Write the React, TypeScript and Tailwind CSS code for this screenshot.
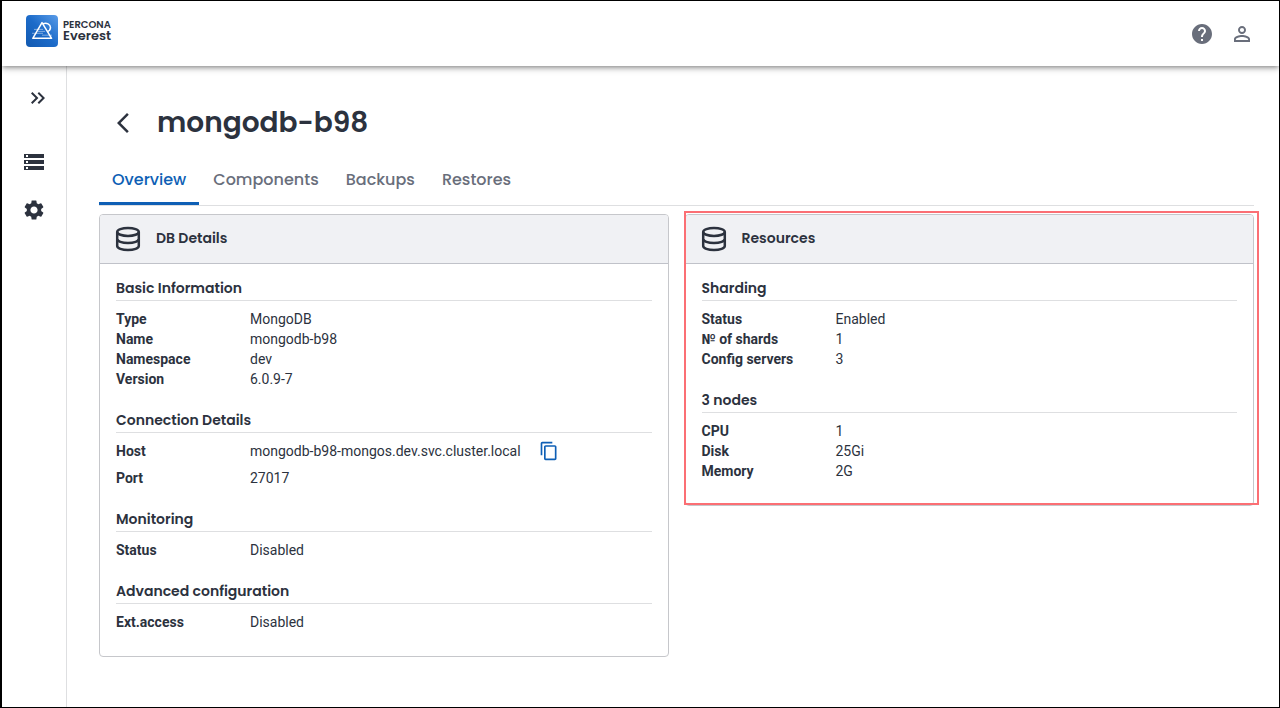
import type { ReactNode } from "react";
import {
  MdArrowBackIosNew,
  MdContentCopy,
  MdHelp,
  MdKeyboardDoubleArrowRight,
  MdPermIdentity,
  MdSettings,
  MdStorage,
} from "react-icons/md";

const headingFont = "font-[Poppins,Inter,sans-serif]";

function Logo() {
  return (
    <a href="#" className={`flex items-center gap-[5px] text-[#2c323e] ${headingFont}`}>
      <svg width="32" height="32" viewBox="0 0 32 32" aria-hidden="true">
        <defs>
          <linearGradient id="logo-bg" x1="0" y1="1" x2="1" y2="0">
            <stop offset="0" stopColor="#1259b0" />
            <stop offset="0.5" stopColor="#1c6bc9" />
            <stop offset="1" stopColor="#5a9ce8" />
          </linearGradient>
        </defs>
        <rect width="32" height="32" rx="4" fill="url(#logo-bg)" />
        <g fill="none" stroke="#fff" strokeWidth="1.5" strokeLinejoin="round">
          <path d="M16 7.6 L6.8 23.3 H25.6 Z" />
          <path d="M17 8.8 C20.6 7.300 24.400 9.200 24.500 12.600 C24.500 14.600 23.200 16 21.300 16.600" />
          <g strokeWidth="0.9" opacity="0.5">
            <path d="M8 14.4H17M6 18.300H17M12 16.400H19M16 20.200H26" />
          </g>
        </g>
      </svg>
      <span className="flex flex-col font-semibold">
        <span className="text-[10px] leading-[10px]">PERCONA</span>
        <span className="text-[13px] leading-3">Everest</span>
      </span>
    </a>
  );
}

function DatabaseIcon() {
  return (
    <svg width="28" height="28" viewBox="0 0 28 28" fill="none" stroke="#2c323e" strokeWidth="2.5" aria-hidden="true">
      <ellipse cx="14" cy="6.9" rx="10.8" ry="4" />
      <path d="M3.2 6.9V21.1C3.2 23.3 8 25.1 14 25.1S24.800 23.300 24.800 21.100V6.900" />
      <path d="M3.2 14C3.2 16.2 8 18 14 18S24.800 16.200 24.800 14" />
    </svg>
  );
}

function Card({ title, children }: { title: string; children: ReactNode }) {
  return (
    <section className="overflow-hidden rounded border border-[#c6c7cb] bg-white">
      <header className="flex h-[49px] items-center gap-3.5 border-b border-[#c0c2c9] bg-[#f0f1f4] px-3.5">
        <DatabaseIcon />
        <h2 className={`pb-0.5 text-[14px] font-semibold ${headingFont}`}>{title}</h2>
      </header>
      <div className="flex flex-col gap-5 px-4 pt-[13px] pb-6">{children}</div>
    </section>
  );
}

function Section({ title, children }: { title: string; children: ReactNode }) {
  return (
    <section>
      <h3 className={`border-b border-[#dedfe1] text-[14px] leading-[23px] font-semibold ${headingFont}`}>{title}</h3>
      <dl className="pt-2">{children}</dl>
    </section>
  );
}

function Row({ label, value, copy = false }: { label: string; value: string; copy?: boolean }) {
  return (
    <div className={copy ? "mb-[7px] flex h-5 items-center" : "flex h-5 items-center"}>
      <dt className="w-[134px] shrink-0 font-bold">{label}</dt>
      <dd className="flex items-center gap-[18px]">
        {value}
        {copy && (
          <button type="button" aria-label="Copy host" className="-my-2 text-[#0e5fb5]">
            <MdContentCopy size={20} />
          </button>
        )}
      </dd>
    </div>
  );
}

const tabs = ["Overview", "Components", "Backups", "Restores"];

export default function App() {
  return (
    <div className="flex min-h-screen flex-col border border-l-2 border-black bg-white font-[Roboto,sans-serif] text-[14px] leading-5 text-[#2c323e]">
      <header className="relative flex h-[65px] items-center justify-between pr-[25px] pl-6 shadow-[0_2px_4px_-1px_rgba(0,0,0,0.3),0_3px_6px_rgba(0,0,0,0.22)]">
        <div className="pb-1.5">
          <Logo />
        </div>
        <div className="flex items-center gap-4 text-[#696e7b]">
          <button type="button" aria-label="Help">
            <MdHelp size={24} />
          </button>
          <button type="button" aria-label="Account">
            <MdPermIdentity size={24} />
          </button>
        </div>
      </header>
      <div className="flex flex-1">
        <nav aria-label="Main" className="flex w-[65px] shrink-0 flex-col items-center border-r border-[#dedfe1] pt-5">
          <button type="button" aria-label="Expand menu" className="mb-10 ml-2">
            <MdKeyboardDoubleArrowRight size={24} />
          </button>
          <a href="#" aria-label="Databases" className="mb-6">
            <MdStorage size={24} />
          </a>
          <a href="#" aria-label="Settings">
            <MdSettings size={24} />
          </a>
        </nav>
        <main className="min-w-0 flex-1 pt-[37px] pr-[25px] pb-12 pl-8">
          <div className="flex h-10 items-center gap-[22px] pl-3">
            <button type="button" aria-label="Back">
              <MdArrowBackIosNew size={24} />
            </button>
            <h1 className={`text-[28px] leading-10 font-semibold ${headingFont}`}>mongodb-b98</h1>
          </div>
          <div role="tablist" className="mt-3.5 flex h-[49px] gap-px border-b border-[#dedfe1]">
            {tabs.map((tab, i) => (
              <button
                key={tab}
                type="button"
                role="tab"
                aria-selected={i === 0}
                className={`border-b-3 px-[13px] text-[16px] font-medium ${headingFont} ${
                  i === 0 ? "border-[#0e5fb5] text-[#0e5fb5]" : "border-transparent text-[#696e7b]"
                }`}
              >
                {tab}
              </button>
            ))}
          </div>
          <div className="mt-2 grid grid-cols-2 items-start gap-4">
            <Card title="DB Details">
              <Section title="Basic Information">
                <Row label="Type" value="MongoDB" />
                <Row label="Name" value="mongodb-b98" />
                <Row label="Namespace" value="dev" />
                <Row label="Version" value="6.0.9-7" />
              </Section>
              <Section title="Connection Details">
                <Row label="Host" value="mongodb-b98-mongos.dev.svc.cluster.local" copy />
                <Row label="Port" value="27017" />
              </Section>
              <Section title="Monitoring">
                <Row label="Status" value="Disabled" />
              </Section>
              <Section title="Advanced configuration">
                <Row label="Ext.access" value="Disabled" />
              </Section>
            </Card>
            <div className="relative">
              <Card title="Resources">
                <Section title="Sharding">
                  <Row label="Status" value="Enabled" />
                  <Row label="№ of shards" value="1" />
                  <Row label="Config servers" value="3" />
                </Section>
                <Section title="3 nodes">
                  <Row label="CPU" value="1" />
                  <Row label="Disk" value="25Gi" />
                  <Row label="Memory" value="2G" />
                </Section>
              </Card>
              <div className="pointer-events-none absolute -top-[3px] -right-[5px] bottom-px -left-px border-2 border-[#fb6f74]" />
            </div>
          </div>
        </main>
      </div>
    </div>
  );
}
